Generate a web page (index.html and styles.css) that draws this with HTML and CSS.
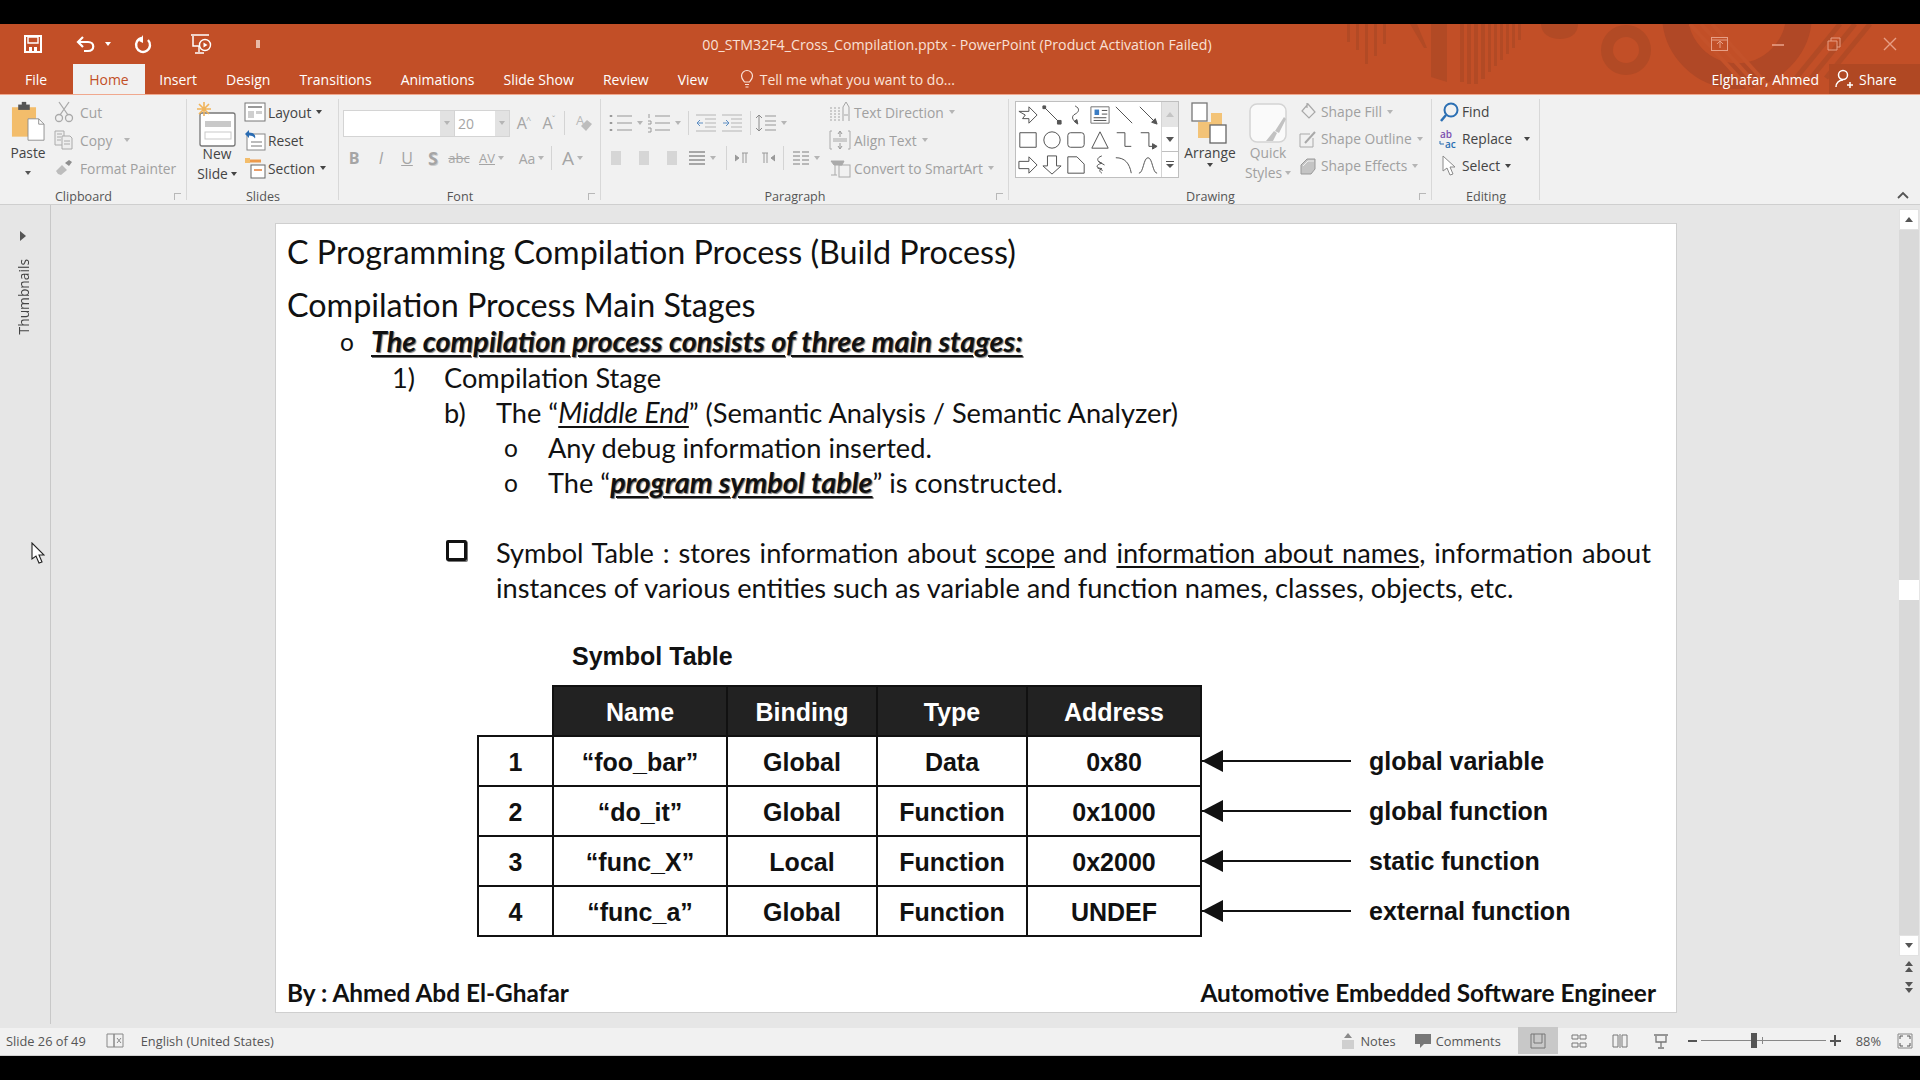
FILE: index.html
```html
<!DOCTYPE html>
<html lang="en">
<head>
<meta charset="utf-8">
<title>PowerPoint</title>
<link rel="stylesheet" href="styles.css">
</head>
<body>
<div class="app">
  <div class="blackbar top"></div>

  <header class="chrome">
    <svg class="decor" viewBox="0 0 600 71" width="600" height="71" aria-hidden="true">
      <g fill="#b24a25">
        <rect x="17" y="0" width="3" height="18"/><rect x="26" y="0" width="3" height="26"/><rect x="35" y="0" width="3" height="40"/><rect x="44" y="0" width="3" height="32"/><rect x="53" y="0" width="3" height="20"/>
        <path d="M80 0h7l10 24h-3z"/>
        <path d="M101 0h16v58l-16-5z"/>
        <rect x="130" y="0" width="4" height="58"/><rect x="137" y="0" width="4" height="60"/><rect x="144" y="0" width="4" height="60"/><rect x="151" y="0" width="4" height="55"/><rect x="158" y="0" width="3" height="48"/><rect x="164" y="0" width="3" height="42"/><rect x="170" y="0" width="3" height="36"/><rect x="176" y="0" width="3" height="30"/><rect x="182" y="0" width="3" height="24"/><rect x="188" y="0" width="3" height="16"/>
        <path d="M211 0h37c0 10-8 15-18 15s-19-5-19-15z"/>
      </g>
      <circle cx="296" cy="26" r="19" fill="none" stroke="#b24a25" stroke-width="12"/>
      <circle cx="407" cy="-10" r="62" fill="none" stroke="#b04826" stroke-width="26"/>
      <g stroke="#c4522a" stroke-width="4"><path d="M360 0l60 66M371 0l60 66M382 0l60 66"/></g>
      <g stroke="#b24a25" stroke-width="5"><path d="M510 0l-44 54M525 0l-44 54M540 0l-44 54"/></g>
    </svg>

    <div class="titlerow">
      <div class="qat">
        <svg class="qat-save" width="20" height="20" viewBox="0 0 20 20"><path d="M2 2h16v16H2z" fill="none" stroke="#fff" stroke-width="2"/><path d="M5 3h10v6H5z" fill="none" stroke="#fff" stroke-width="1.4"/><path d="M6 13h3v4H6zM11 13h3v4h-3z" fill="#fff"/></svg>
        <svg class="qat-undo" width="20" height="20" viewBox="0 0 20 20"><path d="M2 8h10c7 0 7 9 0 9H8M7 3L2 8l5 5" fill="none" stroke="#fff" stroke-width="2.2"/></svg>
        <span class="caret white qat-c1"></span>
        <svg class="qat-redo" width="20" height="20" viewBox="0 0 20 20"><path d="M9 4a7 7 0 1 0 6 2" fill="none" stroke="#fff" stroke-width="2.4"/><path d="M10 1v8l-4-2z" fill="#fff"/></svg>
        <svg class="qat-show" width="24" height="24" viewBox="0 0 24 24"><path d="M2 3h18M4 4v10h7" fill="none" stroke="#fff" stroke-width="1.5"/><circle cx="16" cy="13" r="5.5" fill="none" stroke="#fff" stroke-width="1.4"/><path d="M14.5 10.5l4 2.5-4 2.5z" fill="#fff"/><path d="M10 14v6M6 21h9" stroke="#fff" stroke-width="1.4"/></svg>
        <span class="qat-more"></span>
      </div>
      <div class="doctitle">00_STM32F4_Cross_Compilation.pptx - PowerPoint (Product Activation Failed)</div>
      <div class="winctl">
        <svg width="18" height="14" viewBox="0 0 18 14"><rect x=".5" y=".5" width="16" height="13" fill="none" stroke="#e79f86"/><path d="M1 3h15M9 11V5M6 7l3-3 3 3" stroke="#e79f86" fill="none"/></svg>
        <svg width="14" height="14" viewBox="0 0 14 14"><path d="M1 8h12" stroke="#e79f86" stroke-width="1.6"/></svg>
        <svg width="14" height="14" viewBox="0 0 14 14"><path d="M1 4h9v9H1zM4 4V1h9v9h-3" fill="none" stroke="#e79f86"/></svg>
        <svg width="14" height="14" viewBox="0 0 14 14"><path d="M1 1l12 12M13 1L1 13" stroke="#e79f86" stroke-width="1.4"/></svg>
      </div>
    </div>

    <nav class="tabrow">
      <span class="tab t-file">File</span>
      <span class="tab active">Home</span>
      <span class="tab">Insert</span>
      <span class="tab">Design</span>
      <span class="tab">Transitions</span>
      <span class="tab">Animations</span>
      <span class="tab">Slide Show</span>
      <span class="tab">Review</span>
      <span class="tab">View</span>
      <span class="tell">
        <svg width="14" height="20" viewBox="0 0 14 20"><path d="M4.5 13C3 11 1.5 9.500 1.500 7a5.500 5.500 0 0 1 11 0c0 2.500-1.500 4-3 6zM5 15.500h4M5.500 18h3" fill="none" stroke="#fbe3d9" stroke-width="1.200"/></svg>
        Tell me what you want to do...
      </span>
      <span class="spacer"></span>
      <span class="user">Elghafar, Ahmed</span>
      <span class="share">
        <svg width="18" height="20" viewBox="0 0 18 20"><circle cx="8" cy="6" r="4.500" fill="none" stroke="#fff" stroke-width="1.500"/><path d="M1 18c0-4 3-7 7-7M12 16h6M15 13v6" fill="none" stroke="#fff" stroke-width="1.500"/></svg>
        Share
      </span>
    </nav>
  </header>

  <section class="ribbon">
    <div class="group g-clip">
      <div class="gbody">
        <div class="big b-paste">
          <svg width="34" height="41" viewBox="0 0 38 46"><rect x="1" y="7" width="27" height="33" fill="#f3bd6b"/><path d="M8 4h13v6H8z" fill="#555"/><path d="M12 1h5v5h-5z" fill="#555"/><path d="M19 20h12l6 6v18H19z" fill="#fff" stroke="#8a8a8a"/><path d="M31 20v6h6" fill="none" stroke="#8a8a8a"/></svg>
          <span class="biglabel dark">Paste</span>
          <span class="caret"></span>
        </div>
        <div class="stack">
          <div class="row dim"><svg class="sic" width="20" height="22" viewBox="0 0 20 22"><path d="M5 1l9 13M15 1L6 14" stroke="#a9a9a9" stroke-width="1.300" fill="none"/><circle cx="5" cy="17" r="3.500" fill="none" stroke="#a9a9a9" stroke-width="1.300"/><circle cx="15" cy="17" r="3.500" fill="none" stroke="#a9a9a9" stroke-width="1.300"/></svg>Cut</div>
          <div class="row dim"><svg class="sic" width="20" height="22" viewBox="0 0 20 22"><path d="M1 2h9l0 14H1z" fill="#eee" stroke="#aaa"/><path d="M8 7h8l2 2v11H8z" fill="#eee" stroke="#aaa"/><path d="M3 5h5M3 8h4M3 11h4M10 12h6M10 15h6" stroke="#aaa"/></svg>Copy<span class="caret lt ml12"></span></div>
          <div class="row dim"><svg class="sic" width="20" height="22" viewBox="0 0 20 22"><path d="M2 14l6-6 5 5-6 5-3-1z" fill="#bdbdbd"/><path d="M11 6l4-3 3 2-3 4z" fill="#8e8e8e"/></svg>Format Painter</div>
        </div>
      </div>
      <div class="glabel off">Clipboard<span class="launch"></span></div>
    </div>

    <div class="group g-slides">
      <div class="gbody">
        <div class="big b-new">
          <svg width="40" height="46" viewBox="0 0 40 46"><rect x="3" y="12" width="35" height="33" rx="2" fill="#fff" stroke="#777" stroke-width="1.300"/><rect x="8" y="20" width="26" height="6" fill="#c9c9c9"/><rect x="8" y="31" width="26" height="7" fill="#fff" stroke="#c9c9c9"/><g stroke="#f0b45a" stroke-width="1.600"><path d="M7 1v14M0 8h14M2 3l10 10M12 3L2 13"/></g></svg>
          <span class="biglabel dark">New</span>
          <span class="biglabel dark">Slide<span class="caret dk ml3"></span></span>
        </div>
        <div class="stack">
          <div class="row dark"><svg class="sic2" width="22" height="22" viewBox="0 0 22 22"><rect x="1" y="2" width="20" height="18" fill="#fff" stroke="#777"/><path d="M4 6h14" stroke="#999" stroke-width="2"/><rect x="4" y="10" width="6" height="7" fill="#cfcfcf"/><rect x="12" y="10" width="6" height="3" fill="#cfcfcf"/></svg>Layout<span class="caret dk ml5"></span></div>
          <div class="row dark"><svg class="sic2" width="22" height="22" viewBox="0 0 22 22"><rect x="3" y="5" width="18" height="16" fill="#fff" stroke="#888"/><path d="M7 13h11M7 17h11" stroke="#bbb" stroke-width="2"/><path d="M1 5l4-4v2.500c5 0 7 3 6 6-1-2-3-3-6-3V9z" fill="#2a6cb3"/></svg>Reset</div>
          <div class="row dark"><svg class="sic2" width="22" height="22" viewBox="0 0 22 22"><rect x="7" y="8" width="14" height="13" fill="#fff" stroke="#666"/><path d="M1 4h16" stroke="#ed9a4b" stroke-width="3"/><rect x="1" y="1" width="5" height="5" fill="#f3bd6b"/><path d="M10 13h8" stroke="#e37c36" stroke-width="1.500"/></svg>Section<span class="caret dk ml5"></span></div>
        </div>
      </div>
      <div class="glabel">Slides</div>
    </div>

    <div class="group g-font">
      <div class="gbody col">
        <div class="toolrow r1">
          <span class="combo c-name"><span class="combo-btn"><span class="caret lt"></span></span></span>
          <span class="combo c-size">20<span class="combo-btn"><span class="caret lt"></span></span></span>
          <span class="gl w-grow">A<sup class="mini">^</sup></span>
          <span class="gl w-grow">A<sup class="mini">ˇ</sup></span>
          <span class="vsep"></span>
          <svg class="w-clear" width="22" height="22" viewBox="0 0 22 22"><text x="3" y="13" font-family="Open Sans" font-size="13" fill="#b9b9b9">A</text><path d="M8 14l6-6 5 4-6 7z" fill="#bdbdbd"/></svg>
        </div>
        <div class="toolrow r2">
          <b class="gl w-b">B</b><i class="gl w-i">I</i><u class="gl w-u">U</u>
          <span class="gl w-s">S</span><span class="gl w-abc">abc</span>
          <span class="gl w-av">AV</span><span class="caret lt"></span>
          <span class="gl w-aa">Aa</span><span class="caret lt"></span>
          <span class="vsep m-sep"></span>
          <span class="gl w-fa">A</span><span class="caret lt"></span>
        </div>
      </div>
      <div class="glabel off">Font<span class="launch"></span></div>
    </div>

    <div class="group g-para">
      <div class="gbody">
        <div class="col para-left">
          <div class="toolrow r1 pgap">
            <svg width="24" height="20" viewBox="0 0 24 20"><path d="M8 3h15M8 10h15M8 17h15" stroke="#b5b5b5" stroke-width="1.400"/><path d="M2 2v2M2 9v2M2 16v2" stroke="#9a9a9a" stroke-width="2.500"/></svg><span class="caret lt"></span>
            <svg class="ml4" width="24" height="20" viewBox="0 0 24 20"><path d="M8 3h15M8 10h15M8 17h15" stroke="#b5b5b5" stroke-width="1.400"/><path d="M2 1v4M1 8h3v3H1M1 15h3v4H1" stroke="#9a9a9a" fill="none"/></svg><span class="caret lt"></span>
            <span class="vsep ml6"></span>
            <svg class="ml6" width="22" height="20" viewBox="0 0 22 20"><path d="M1 2h20M10 6h11M10 10h11M10 14h11M1 18h20" stroke="#b5b5b5" stroke-width="1.200"/><path d="M8 10H2m3-3l-3 3 3 3" stroke="#5e8fc4" fill="none"/></svg>
            <svg class="ml4" width="22" height="20" viewBox="0 0 22 20"><path d="M1 2h20M10 6h11M10 10h11M10 14h11M1 18h20" stroke="#b5b5b5" stroke-width="1.200"/><path d="M2 10h6m-3-3l3 3-3 3" stroke="#5e8fc4" fill="none"/></svg>
            <span class="vsep ml6"></span>
            <svg class="ml4" width="22" height="20" viewBox="0 0 22 20"><path d="M4 2v16M1 5l3-3 3 3M1 15l3 3 3-3" stroke="#8a8a8a" fill="none"/><path d="M10 3h11M10 8h11M10 12h11M10 17h11" stroke="#b5b5b5" stroke-width="1.300"/></svg><span class="caret lt"></span>
          </div>
          <div class="toolrow r2 pgap2">
            <svg width="16" height="16" viewBox="0 0 16 16"><path d="M1 1h10v14H1z" fill="#d6d6d6"/></svg>
            <svg class="ml10" width="16" height="16" viewBox="0 0 16 16"><path d="M3 1h10v14H3z" fill="#d6d6d6"/></svg>
            <svg class="ml10" width="16" height="16" viewBox="0 0 16 16"><path d="M5 1h10v14H5z" fill="#d6d6d6"/></svg>
            <svg class="ml10" width="18" height="16" viewBox="0 0 18 16"><path d="M1 2h16M1 6h16M1 10h16M1 14h16" stroke="#8f8f8f" stroke-width="1.400"/></svg><span class="caret lt"></span>
            <span class="vsep ml10"></span>
            <svg class="ml8" width="14" height="14" viewBox="0 0 14 14"><path d="M0 4l4 3-4 3zM7 2h6M8 2v10M11 2v10" stroke="#999" fill="#999"/></svg>
            <svg class="ml12" width="14" height="14" viewBox="0 0 14 14"><path d="M14 4l-4 3 4 3zM1 2h6M3 2v10M6 2v10" stroke="#999" fill="#999"/></svg>
            <span class="vsep ml8"></span>
            <svg class="ml8" width="18" height="16" viewBox="0 0 18 16"><path d="M1 2h7M1 6h7M1 10h7M1 14h7M10 2h7M10 6h7M10 10h7M10 14h7" stroke="#a5a5a5" stroke-width="1.300"/></svg><span class="caret lt"></span>
          </div>
        </div>
        <div class="stack para-stack">
          <div class="row dim"><svg class="sic3" width="22" height="22" viewBox="0 0 22 22"><path d="M2 6v14M6 6v14M10 6v14" stroke="#a5a5a5" stroke-dasharray="2 1"/><path d="M14 20V6l3-5 3 5v14M15 14h4" stroke="#a5a5a5" fill="none"/></svg>Text Direction<span class="caret lt ml5"></span></div>
          <div class="row dim"><svg class="sic3" width="22" height="22" viewBox="0 0 22 22"><path d="M3 2H1v18h2M19 2h2v18h-2" stroke="#aaa" fill="none"/><path d="M4 11h14" stroke="#ccc" stroke-width="4"/><path d="M11 3v5M11 14v5M9 5l2-3 2 3M9 17l2 3 2-3" stroke="#999" fill="none"/></svg>Align Text<span class="caret lt ml5"></span></div>
          <div class="row dim"><svg class="sic3" width="22" height="22" viewBox="0 0 22 22"><rect x="10" y="8" width="11" height="12" fill="none" stroke="#aaa"/><path d="M2 4h13l-2 4H5zM6 8v10M2 18h6" fill="#aaa" stroke="#aaa"/></svg>Convert to SmartArt<span class="caret lt ml5"></span></div>
        </div>
      </div>
      <div class="glabel off">Paragraph<span class="launch"></span></div>
    </div>

    <div class="group g-draw">
      <div class="gbody">
        <div class="gallery">
          <div class="shapes">
            <svg viewBox="0 0 22 22"><path d="M1 7h11V2l9 9-9 9v-5H5l3-4z"/></svg>
            <svg viewBox="0 0 22 22"><path d="M2 2l18 18"/><path d="M1 1h3v3H1zM17 17h4v4h-4z" fill="#555"/></svg>
            <svg viewBox="0 0 22 22"><path d="M10 1c6 3 4 7 0 9s-4 6 2 10"/><path d="M9 18l4 3-1-5z" fill="#555"/></svg>
            <svg viewBox="0 0 22 22"><path d="M1 2h20v18H1z" stroke="#777"/><path d="M4 14h14M4 17h14M13 6h6M13 10h6"/><path d="M5 5h5v6H5z" fill="#3b7dc4" stroke="none"/></svg>
            <svg viewBox="0 0 22 22"><path d="M2 2l18 18"/></svg>
            <svg viewBox="0 0 22 22"><path d="M2 2l17 17"/><path d="M21 21l-6-2 4-4z" fill="#555"/></svg>
            <svg viewBox="0 0 22 22"><path d="M2 3h18v16H2z"/></svg>
            <svg viewBox="0 0 22 22"><circle cx="11" cy="11" r="9"/></svg>
            <svg viewBox="0 0 22 22"><rect x="2" y="3" width="18" height="16" rx="3"/></svg>
            <svg viewBox="0 0 22 22"><path d="M11 2l9 18H2z"/></svg>
            <svg viewBox="0 0 22 22"><path d="M3 3h9v15h7"/></svg>
            <svg viewBox="0 0 22 22"><path d="M3 3h9v15h5"/><path d="M21 18l-5-3v6z" fill="#555"/></svg>
            <svg viewBox="0 0 22 22"><path d="M1 7h11V2l9 9-9 9v-5H1z"/></svg>
            <svg viewBox="0 0 22 22"><path d="M6 1h10v11h5l-10 9L1 12h5z"/></svg>
            <svg viewBox="0 0 22 22"><path d="M2 2h10l8 8v10H2z"/></svg>
            <svg viewBox="0 0 22 22"><path d="M13 1c-6 2-6 6 0 8-7 2-7 5 0 6-3 1-3 3 0 5M9 7l7 4M8 14l6 3"/></svg>
            <svg viewBox="0 0 22 22"><path d="M2 3c10 0 15 6 17 17"/></svg>
            <svg viewBox="0 0 22 22"><path d="M1 20C6 20 6 3 11 3s5 17 10 17"/></svg>
          </div>
          <div class="gscroll">
            <span class="gs gs1"><span class="tri up lt2"></span></span>
            <span class="gs gs2"><span class="tri dn"></span></span>
            <span class="gs gs3"><span class="more"></span></span>
          </div>
        </div>
        <div class="big b-arrange">
          <svg width="40" height="46" viewBox="0 0 40 46"><rect x="21" y="12" width="11" height="25" fill="#f3c377"/><rect x="8" y="21" width="14" height="16" fill="#f3c377"/><rect x="2" y="2" width="15" height="18" fill="#fff" stroke="#777" stroke-width="1.300"/><rect x="20" y="24" width="16" height="18" fill="#fff" stroke="#666" stroke-width="1.300"/></svg>
          <span class="biglabel dark">Arrange</span>
          <span class="caret dk"></span>
        </div>
        <div class="big b-quick">
          <svg width="40" height="46" viewBox="0 0 40 46"><rect x="2" y="3" width="36" height="38" rx="7" fill="#fafafa" stroke="#d4d4d4" stroke-width="1.500"/><path d="M18 40l8-10 3 2-4 8zM27 30l9-14 2 2-7 14z" fill="#c2c2c2"/></svg>
          <span class="biglabel dim">Quick</span>
          <span class="biglabel dim">Styles<span class="caret lt ml3"></span></span>
        </div>
        <div class="stack st-shape">
          <div class="row dim"><svg class="sic4" width="18" height="20" viewBox="0 0 18 20"><path d="M9 2l7 8-6 6-7-7zM8 1v5" fill="none" stroke="#a9a9a9" stroke-width="1.200"/></svg>Shape Fill<span class="caret lt ml5"></span></div>
          <div class="row dim"><svg class="sic4" width="18" height="20" viewBox="0 0 18 20"><path d="M1 5h10M1 5v13h13V9" fill="none" stroke="#a9a9a9"/><path d="M6 14L16 3" stroke="#a9a9a9" stroke-width="2"/></svg>Shape Outline<span class="caret lt ml5"></span></div>
          <div class="row dim"><svg class="sic4" width="18" height="20" viewBox="0 0 18 20"><path d="M2 9l6-6h8v10l-4 5H2z" fill="#c4c4c4" stroke="#999"/><path d="M4 10l5-5h6" fill="none" stroke="#eee"/></svg>Shape Effects<span class="caret lt ml5"></span></div>
        </div>
      </div>
      <div class="glabel off">Drawing<span class="launch"></span></div>
    </div>

    <div class="group g-edit">
      <div class="gbody">
        <div class="stack st-edit">
          <div class="row dark"><svg class="sic5" width="20" height="22" viewBox="0 0 20 22"><circle cx="12" cy="9" r="6.500" fill="none" stroke="#2b6fb3" stroke-width="2"/><path d="M7 14l-5 6" stroke="#2b6fb3" stroke-width="2.500"/></svg>Find</div>
          <div class="row dark"><svg class="sic5" width="20" height="22" viewBox="0 0 20 22"><text x="1" y="10" font-family="Open Sans" font-size="10" font-weight="600" fill="#7c4fb0">ab</text><text x="6" y="20" font-family="Open Sans" font-size="10" font-weight="600" fill="#2b6fb3">ac</text><path d="M1 13v3h4" fill="none" stroke="#2b6fb3"/></svg>Replace<span class="caret dk ml12"></span></div>
          <div class="row dark"><svg class="sic5" width="20" height="22" viewBox="0 0 20 22"><path d="M4 1v15l4-3 3 7 3-1-3-7h5z" fill="#fff" stroke="#8a8a8a"/></svg>Select<span class="caret dk ml5"></span></div>
        </div>
      </div>
      <div class="glabel">Editing</div>
    </div>
    <div class="ribbon-rest"><svg width="14" height="10" viewBox="0 0 14 10"><path d="M2 8l5-5 5 5" fill="none" stroke="#555" stroke-width="1.800"/></svg></div>
  </section>

  <main class="main">
    <aside class="thumbs">
      <svg class="chev" width="8" height="10" viewBox="0 0 8 10"><path d="M1 0l6 5-6 5z" fill="#555"/></svg>
      <span class="thumbs-label">Thumbnails</span>
      <svg class="cursor" width="14" height="22" viewBox="0 0 14 22"><path d="M1 1v16l4-3 3 7 3-1-3-7h5z" fill="#fff" stroke="#222" stroke-width="1.100"/></svg>
    </aside>

    <div class="workspace">
      <article class="slide">
        <h1 class="s-title">C Programming Compilation Process (Build Process)</h1>
        <h2 class="s-sub">Compilation Process Main Stages</h2>
        <div class="line l1 boldline"><span class="mk mk-o1">o</span><span class="shadowed">The compilation process consists of three main stages:</span></div>
        <div class="line l2"><span class="mk mk-n">1)</span><span>Compilation Stage</span></div>
        <div class="line l3"><span class="mk mk-n">b)</span><span>The “<em class="ul">Middle End</em>” (Semantic Analysis / Semantic Analyzer)</span></div>
        <div class="line l4"><span class="mk mk-o2">o</span><span>Any debug information inserted.</span></div>
        <div class="line l4 l-gap"><span class="mk mk-o2">o</span><span>The “<span class="shadowed">program symbol table</span>” is constructed.</span></div>
        <div class="line l3 l-wrap"><span class="mk mk-box"><span class="box"></span></span><span class="wraptext">Symbol Table : stores information about <span class="ul">scope</span> and <span class="ul">information about names</span>, information about instances of various entities such as variable and function names, classes, objects, etc.</span></div>

        <div class="symblock">
          <div class="symtitle">Symbol Table</div>
          <div class="symrow">
            <table class="symtable">
              <thead>
                <tr><th class="blank"></th><th>Name</th><th>Binding</th><th>Type</th><th>Address</th></tr>
              </thead>
              <tbody>
                <tr><td>1</td><td>“foo_bar”</td><td>Global</td><td>Data</td><td>0x80</td></tr>
                <tr><td>2</td><td>“do_it”</td><td>Global</td><td>Function</td><td>0x1000</td></tr>
                <tr><td>3</td><td>“func_X”</td><td>Local</td><td>Function</td><td>0x2000</td></tr>
                <tr><td>4</td><td>“func_a”</td><td>Global</td><td>Function</td><td>UNDEF</td></tr>
              </tbody>
            </table>
            <ul class="notes">
              <li><span class="arrow"></span>global variable</li>
              <li><span class="arrow"></span>global function</li>
              <li><span class="arrow"></span>static function</li>
              <li><span class="arrow"></span>external function</li>
            </ul>
          </div>
        </div>

        <footer class="s-foot"><span>By : Ahmed Abd El-Ghafar</span><span>Automotive Embedded Software Engineer</span></footer>
      </article>
    </div>

    <aside class="vscroll">
      <span class="sb-btn"><span class="tri up"></span></span>
      <span class="sb-track"><span class="sb-thumb"></span></span>
      <span class="sb-btn"><span class="tri dn"></span></span>
      <span class="sb-page"><span class="tri up"></span><span class="tri up neg"></span></span>
      <span class="sb-page"><span class="tri dn"></span><span class="tri dn neg"></span></span>
    </aside>
  </main>

  <footer class="status">
    <span class="st-left">Slide 26 of 49</span>
    <svg class="st-book" width="18" height="16" viewBox="0 0 18 16"><path d="M1 1h7v13H1zM8 1h9v13H8z" fill="none" stroke="#888"/><path d="M11 5l4 5M15 5l-4 5" stroke="#888"/></svg>
    <span class="st-lang">English (United States)</span>
    <span class="spacer"></span>
    <svg width="14" height="18" viewBox="0 0 14 18"><path d="M1 8h12v9H1z" fill="#cfcfcf"/><path d="M7 1l4 5H3z" fill="#8a8a8a"/></svg>
    <span class="st-notes">Notes</span>
    <svg class="st-cic" width="16" height="16" viewBox="0 0 16 16"><path d="M0 1h16v10H9l-4 4v-4H0z" fill="#777"/></svg>
    <span class="st-comm">Comments</span>
    <span class="view on"><svg width="16" height="16" viewBox="0 0 16 16"><path d="M1 1h14v14H1zM4 1v9h8V1" fill="none" stroke="#777"/></svg></span>
    <span class="view"><svg width="16" height="16" viewBox="0 0 16 16"><path d="M1 2h6v4H1zM9 2h6v4H9zM1 10h6v4H1zM9 10h6v4H9z" fill="none" stroke="#777"/></svg></span>
    <span class="view"><svg width="16" height="16" viewBox="0 0 16 16"><path d="M1 2h5v12H1zM10 2h5v12h-5zM8 1v14" fill="none" stroke="#777"/></svg></span>
    <span class="view"><svg width="16" height="16" viewBox="0 0 16 16"><path d="M1 2h14M3 3v6h10V3M8 9v5M5 15h6" fill="none" stroke="#777" stroke-width="1.300"/></svg></span>
    <span class="zoomctl">
      <span class="z-minus"></span>
      <span class="z-track"><span class="z-thumb"></span><span class="z-tick"></span></span>
      <span class="z-plus"></span>
    </span>
    <span class="st-pct">88%</span>
    <svg class="st-fit" width="16" height="16" viewBox="0 0 16 16"><path d="M1 1h14v14H1z" fill="none" stroke="#888"/><path d="M3 6V3h3M13 6V3h-3M3 10v3h3M13 10v3h-3" fill="none" stroke="#555"/></svg>
  </footer>
  <div class="blackbar bottom"></div>
</div>
</body>
</html>
```
FILE: styles.css
```css
* { box-sizing: border-box; }
html, body { margin: 0; padding: 0; background: #000; }
body { font-family: "Open Sans", "Liberation Sans", sans-serif; overflow: hidden; }
svg { display: block; flex: none; }
.app { width: 1920px; height: 1080px; display: flex; flex-direction: column; }
.blackbar.top { height: 24px; background: #000; }
.blackbar.bottom { height: 24px; background: #000; }
.spacer { flex: 1; }

/* Title bar and tabs */
.chrome { position: relative; height: 71px; background: #c24f27; color: #fff; border-bottom: 1px solid #f0a88e; overflow: hidden; }
.decor { position: absolute; left: 1330px; top: 0; }
.titlerow { position: relative; height: 40px; display: flex; align-items: center; }
.qat { width: 600px; display: flex; align-items: center; padding-left: 23px; }
.qat-undo { margin-left: 33px; }
.qat-c1 { margin-left: 9px; }
.qat-redo { margin-left: 22px; }
.qat-show { margin-left: 36px; }
.qat-more { width: 4px; height: 8px; background: #e8b9a6; margin-left: 43px; }
.doctitle { width: 714px; text-align: center; font-size: 14.2px; color: #f9e0d6; white-space: nowrap; }
.winctl { flex: 1; display: flex; align-items: center; padding-left: 397px; gap: 42px; }
.tabrow { position: relative; height: 30px; display: flex; align-items: stretch; padding-left: 21px; font-size: 14px; }
.tab { display: flex; align-items: center; padding: 0 14.5px; white-space: nowrap; }
.tab.t-file { padding: 0 26px 0 4px; }
.tab.active { background: #f1f1f1; color: #c24f27; padding: 0 16px; height: 31px; }
.tell { display: flex; align-items: center; gap: 6px; margin-left: 17px; color: #fbe3d9; }
.user { display: flex; align-items: center; margin-right: 10px; }
.share { display: flex; align-items: center; gap: 6px; width: 91px; padding-left: 6px; background: #b04823; }

/* Ribbon */
.ribbon { height: 110px; background: #f1f1f1; border-bottom: 1px solid #cfcfcf; display: flex; color: #444; font-size: 13.8px; }
.group { position: relative; display: flex; flex-direction: column; padding-top: 3px; }
.group::after { content: ""; position: absolute; right: 0; top: 4px; bottom: 4px; width: 1px; background: #d8d8d8; }
.gbody { flex: 1; display: flex; min-height: 0; }
.gbody.col { flex-direction: column; }
.col { display: flex; flex-direction: column; }
.glabel { position: relative; height: 18px; text-align: center; font-size: 12.6px; line-height: 22px; color: #555; }
.glabel.off { padding-right: 20px; }
.launch { position: absolute; right: 6px; top: 7px; width: 7px; height: 7px; border-left: 1px solid #aaa; border-top: 1px solid #aaa; opacity: .8; }
.g-clip { width: 187px; }
.g-slides { width: 152px; }
.g-font { width: 262px; }
.g-para { width: 408px; }
.g-draw { width: 423px; }
.g-edit { width: 108px; }
.ribbon-rest { flex: 1; display: flex; justify-content: flex-end; align-items: flex-end; padding: 0 10px 4px 0; }

.big { display: flex; flex-direction: column; align-items: center; line-height: 20px; }
.biglabel { display: flex; align-items: center; white-space: nowrap; }
.b-paste { width: 40px; margin-left: 8px; margin-top: 3px; }
.b-paste .biglabel { margin-top: 1px; }
.b-paste .caret { margin-top: 8px; }
.b-new { width: 54px; margin-left: 3px; margin-top: 3px; }
.b-new svg { margin-bottom: -3px; }
.stack { display: flex; flex-direction: column; padding-top: 0; }
.row { height: 28px; display: flex; align-items: center; white-space: nowrap; }
.dim { color: #a0a0a0; }
.dark { color: #444; }
.g-clip .stack { margin-left: 6px; }
.sic { margin-right: 6px; }
.g-slides .stack { margin-left: 0; }
.sic2 { margin-right: 2px; }

.caret { display: inline-block; width: 0; height: 0; border: 3px solid transparent; border-top: 4px solid #555; border-bottom: 0; flex: none; }
.caret.lt { border-top-color: #b5b5b5; }
.caret.dk { border-top-color: #444; }
.caret.white { border-top-color: #fff; }
.ml3 { margin-left: 3px; } .ml4 { margin-left: 4px; } .ml5 { margin-left: 5px; } .ml6 { margin-left: 6px; }
.ml8 { margin-left: 8px; } .ml10 { margin-left: 10px; } .ml12 { margin-left: 12px; }

.toolrow { display: flex; align-items: center; height: 34px; }
.toolrow.r1 { margin-top: 8px; }
.toolrow.r2 { margin-top: 1px; }
.g-font .toolrow { padding-left: 4px; }
.combo { position: relative; display: block; height: 27px; background: #fff; border: 1px solid #d4d4d4; font-size: 14px; color: #a5a5a5; line-height: 25px; padding-left: 3px; }
.c-name { width: 112px; }
.c-size { width: 55px; border-left: 0; }
.combo-btn { position: absolute; right: 0; top: 0; bottom: 0; width: 14px; background: #e2e2e2; display: flex; align-items: center; justify-content: center; }
.gl { display: inline-flex; align-items: center; justify-content: center; color: #a5a5a5; font-size: 16px; font-family: "Open Sans", sans-serif; }
.mini { font-size: 9px; margin-left: -1px; margin-top: -8px; line-height: 1; }
.w-grow { width: 22px; margin-left: 3px; }
.vsep { width: 1px; height: 24px; background: #d4d4d4; flex: none; }
.w-clear { margin-left: 8px; }
.r1 .vsep { margin-left: 4px; }
.w-b { width: 16px; margin-left: 3px; }
.w-i { width: 16px; margin-left: 11px; }
.w-u { width: 16px; margin-left: 10px; }
.w-s { width: 16px; margin-left: 10px; font-weight: 700; font-size: 18px; text-shadow: 1px 1px 0 #ccc; }
.w-abc { width: 22px; margin-left: 7px; font-size: 13px; text-decoration: line-through; }
.w-av { width: 22px; margin-left: 6px; font-size: 13px; text-decoration: underline; }
.w-aa { width: 22px; margin-left: 12px; font-size: 14px; }
.w-fa { width: 18px; margin-left: 7px; font-size: 19px; font-weight: 500; }
.m-sep { margin-left: 7px; }

.para-left { width: 222px; }
.pgap { padding-left: 8px; }
.pgap .caret { margin-left: 4px; }
.pgap .vsep { margin-left: 7px; }
.pgap2 { padding-left: 9px; }
.pgap2 .caret { margin-left: 4px; }
.para-stack { margin-left: 6px; }
.sic3 { margin-right: 3px; }

.gallery { display: flex; width: 164px; height: 77px; margin: 3px 0 0 6px; border: 1px solid #bfbfbf; background: #fff; }
.shapes { flex: 1; display: grid; grid-template-columns: repeat(6, 24px); grid-auto-rows: 25px; padding: 1px 0 0 0; }
.shapes svg { width: 20px; height: 20px; margin: 2px; fill: none; stroke: #555; stroke-width: 1.100; }
.gscroll { width: 17px; display: flex; flex-direction: column; border-left: 1px solid #d4d4d4; }
.gs { flex: 1; display: flex; align-items: center; justify-content: center; }
.gs1 { background: #e4e4e4; }
.gs3 { border-top: 1px solid #bfbfbf; }
.tri { display: block; width: 0; height: 0; border: 4px solid transparent; flex: none; }
.tri.up { border-top: 0; border-bottom: 5px solid #555; }
.tri.dn { border-bottom: 0; border-top: 5px solid #555; }
.tri.lt2 { border-bottom-color: #c4c4c4; }
.more { display: block; width: 8px; height: 7px; border-top: 1px solid #555; position: relative; }
.more::after { content: ""; position: absolute; left: 0; top: 2px; border: 4px solid transparent; border-top: 4px solid #555; border-bottom: 0; }
.b-arrange { width: 56px; margin-left: 3px; margin-top: 3px; }
.b-arrange svg, .b-quick svg { margin-bottom: -4px; }
.b-quick { width: 50px; margin-left: 5px; margin-top: 3px; }
.st-shape { margin-left: 6px; padding-top: 0; }
.st-shape .row, .st-edit .row { height: 27px; }
.sic4 { margin-right: 4px; }
.st-edit { margin-left: 7px; }
.sic5 { margin-right: 3px; }

/* Main */
.main { flex: 1; min-height: 0; display: flex; background: #e6e6e6; }
.thumbs { position: relative; width: 51px; margin-bottom: 4px; border-right: 1px solid #c8c8c8; display: flex; flex-direction: column; align-items: center; padding-top: 26px; }
.thumbs-label { writing-mode: vertical-rl; transform: rotate(180deg); font-size: 13.8px; color: #444; margin-top: 18px; margin-right: 4px; }
.chev { margin-right: 4px; }
.cursor { position: absolute; left: 31px; top: 337px; }
.workspace { flex: 1; padding: 18px 0 0 224px; }
.vscroll { width: 21px; margin-right: 1px; display: flex; flex-direction: column; align-items: center; padding-top: 4px; }
.sb-btn { width: 20px; height: 21px; background: #fff; border: 1px solid #e2e2e2; display: flex; align-items: center; justify-content: center; }
.sb-track { position: relative; width: 20px; height: 705px; background: #d9d9d9; }
.sb-thumb { position: absolute; left: 0; top: 350px; width: 20px; height: 20px; background: #fff; }
.sb-page { height: 21px; display: flex; flex-direction: column; align-items: center; justify-content: center; }
.neg { margin-top: 1px; }

/* Slide */
.slide { width: 1402px; height: 790px; background: #fff; border: 1px solid #cfcfcf; padding: 0 20px 0 11px; color: #111; font-family: "Lato", "Liberation Sans", sans-serif; font-size: 27.2px; display: flex; flex-direction: column; }
.s-title { margin: 9px 0 0; font-size: 32.300px; font-weight: 400; line-height: 38px; white-space: nowrap; }
.s-sub { margin: 15px 0 0; font-size: 32.300px; font-weight: 400; line-height: 38px; white-space: nowrap; }
.line { display: flex; line-height: 35px; white-space: nowrap; }
.boldline { font-style: italic; font-weight: 700; }
.mk { flex: none; font-style: normal; font-weight: 400; }
.mk-o1, .mk-o2 { font-size: 24.500px; }
.l1 { padding-left: 53px; }
.mk-o1 { width: 31px; }
.l2 { padding-left: 105px; margin-top: 1px; }
.l3 { padding-left: 157px; }
.mk-n { width: 52px; }
.l4 { padding-left: 217px; }
.mk-o2 { width: 44px; }
.l-gap { margin-bottom: 35px; }
.l-wrap { white-space: normal; padding-right: 5px; }
.wraptext { text-align: justify; }
.mk-box { width: 52px; display: flex; align-items: flex-start; padding-top: 5px; padding-left: 2px; }
.box { display: block; width: 21px; height: 21px; border: 3px solid #111; box-shadow: 1px 1px 0 #777; border-radius: 2px; }
.ul { text-decoration: underline; text-decoration-thickness: 2px; text-underline-offset: 3px; }
em.ul { font-style: italic; font-size: 28px; }
.shadowed { font-weight: 700; font-style: italic; font-size: 28.800px; text-decoration: underline; text-decoration-thickness: 2px; text-underline-offset: 3px; text-shadow: 1px 1px 1px #777; }

.symblock { margin-top: 35.500px; font-family: "Liberation Sans", Arial, sans-serif; font-weight: 700; font-size: 25px; }
.symtitle { margin-left: 285px; line-height: 30px; }
.symrow { display: flex; margin-left: 190px; margin-top: 14.500px; }
.symtable { border-collapse: collapse; table-layout: fixed; width: 725px; height: 250px; }
.symtable th { background: #222; color: #fff; border: 2px solid #111; font-weight: 700; height: 50px; padding: 3px 0 0; }
.symtable th.blank { background: transparent; border: 0; border-right: 2px solid #111; width: 75px; }
.symtable th:nth-child(2) { width: 174px; }
.symtable th:nth-child(3) { width: 150px; }
.symtable th:nth-child(4) { width: 150px; }
.symtable td { border: 2px solid #111; text-align: center; height: 50px; padding: 3px 0 0; }
.notes { list-style: none; margin: 51px 0 0; padding: 0; }
.notes li { height: 50px; display: flex; align-items: center; white-space: nowrap; }
.arrow { position: relative; display: block; width: 149px; height: 2px; background: #111; margin-right: 18px; }
.arrow::before { content: ""; position: absolute; left: 0; top: -10px; border: 11px solid transparent; border-left: 0; border-right: 21px solid #111; }
.s-foot { margin-top: auto; margin-bottom: 4px; display: flex; justify-content: space-between; font-weight: 700; line-height: 30px; font-size: 24.400px; }

/* Status */
.status { height: 28px; background: #f1f1f1; display: flex; align-items: center; font-size: 12.800px; color: #555; border-bottom: 1px solid #d0d0d0; padding-bottom: 2px; white-space: nowrap; }
.st-left { margin-left: 6px; }
.st-book { margin-left: 20px; }
.st-lang { margin-left: 17px; }
.st-notes { margin-left: 5px; }
.st-cic { margin-left: 19px; }
.st-comm { margin-left: 5px; margin-right: 17px; }
.view { width: 40px; height: 27px; display: flex; align-items: center; justify-content: center; margin-right: 1px; }
.view.on { background: #c8c8c8; }
.zoomctl { display: flex; align-items: center; margin-left: 6px; }
.z-minus { width: 9px; height: 2px; background: #555; }
.z-track { position: relative; width: 125px; height: 1px; background: #888; margin: 0 4px; }
.z-thumb { position: absolute; left: 50px; top: -7px; width: 6px; height: 15px; background: #555; }
.z-tick { position: absolute; left: 61px; top: -3px; width: 1px; height: 7px; background: #888; }
.z-plus { position: relative; width: 11px; height: 2px; background: #555; }
.z-plus::after { content: ""; position: absolute; left: 4.500px; top: -4.500px; width: 2px; height: 11px; background: #555; }
.st-pct { margin-left: 15px; }
.st-fit { margin-left: 16px; margin-right: 7px; }
```
